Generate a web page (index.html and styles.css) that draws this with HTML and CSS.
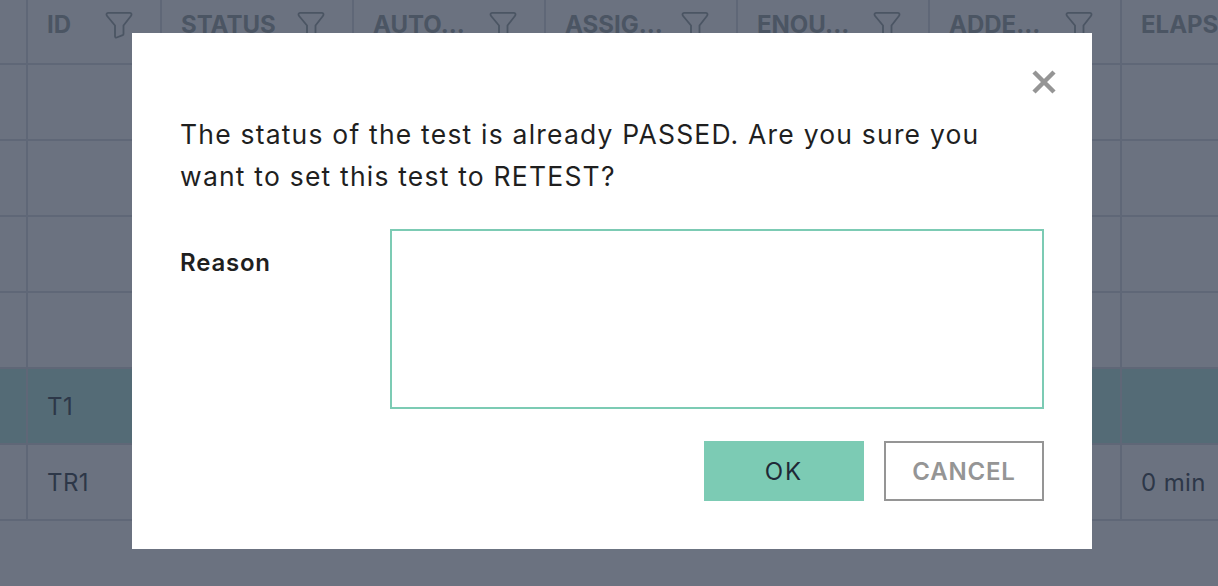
FILE: index.html
```html
<!DOCTYPE html>
<html lang="en">
<head>
  <meta charset="UTF-8" />
  <title>Test runs</title>
  <link rel="stylesheet" href="styles.css">
</head>
<body>
  <svg class="icon-defs" width="0" height="0">
    <symbol id="filter" viewBox="0 0 28 28">
      <path d="M1.500 3.500C1.500 2.500 2.200 1.800 3.200 1.800h21.600c1 0 1.700.7 1.700 1.700 0 .6-.2 1-.6 1.500L18.500 14.500V23c0 .6-.3 1-.8 1.200l-6 2.300c-.9.300-1.700-.2-1.700-1.200V14.500L2.100 5C1.700 4.500 1.500 4.100 1.500 3.500z"/>
    </symbol>
  </svg>

  <table class="runs">
    <colgroup>
      <col class="col-select">
      <col class="col-id">
      <col class="col-wide">
      <col class="col-wide">
      <col class="col-wide">
      <col class="col-wide">
      <col class="col-wide">
      <col class="col-last">
    </colgroup>
    <thead>
      <tr>
        <th></th>
        <th><div class="th-inner"><span class="th-label">ID</span><svg class="filter-icon"><use href="#filter"/></svg></div></th>
        <th><div class="th-inner"><span class="th-label">STATUS</span><svg class="filter-icon"><use href="#filter"/></svg></div></th>
        <th><div class="th-inner"><span class="th-label">AUTO...</span><svg class="filter-icon"><use href="#filter"/></svg></div></th>
        <th><div class="th-inner"><span class="th-label">ASSIG...</span><svg class="filter-icon"><use href="#filter"/></svg></div></th>
        <th><div class="th-inner"><span class="th-label">ENOU...</span><svg class="filter-icon"><use href="#filter"/></svg></div></th>
        <th><div class="th-inner"><span class="th-label">ADDE...</span><svg class="filter-icon"><use href="#filter"/></svg></div></th>
        <th><div class="th-inner"><span class="th-label">ELAPS</span></div></th>
      </tr>
    </thead>
    <tbody>
      <tr><td></td><td></td><td></td><td></td><td></td><td></td><td></td><td></td></tr>
      <tr><td></td><td></td><td></td><td></td><td></td><td></td><td></td><td></td></tr>
      <tr><td></td><td></td><td></td><td></td><td></td><td></td><td></td><td></td></tr>
      <tr><td></td><td></td><td></td><td></td><td></td><td></td><td></td><td></td></tr>
      <tr class="row-selected"><td></td><td>T1</td><td></td><td></td><td></td><td></td><td></td><td></td></tr>
      <tr><td></td><td>TR1</td><td></td><td></td><td></td><td></td><td></td><td>0 min</td></tr>
    </tbody>
  </table>

  <div class="modal">
    <button class="modal-close" aria-label="Close">
      <svg viewBox="0 0 24 24" width="24" height="24"><path d="M2 2l20 20M22 2L2 22"/></svg>
    </button>
    <p class="modal-text">The status of the test is already PASSED. Are you sure you want to set this test to RETEST?</p>
    <div class="form-row">
      <label class="form-label" for="reason">Reason</label>
      <textarea class="form-input" id="reason"></textarea>
    </div>
    <div class="modal-buttons">
      <button class="btn btn-ok">OK</button>
      <button class="btn btn-cancel">CANCEL</button>
    </div>
  </div>
</body>
</html>
```

FILE: styles.css
```css
html, body {
  height: 100%;
}

body {
  margin: 0;
  overflow: hidden;
  position: relative;
  background: #6b7280;
  color: #2d3748;
  font-family: Inter, "Open Sans", sans-serif;
}

.icon-defs {
  position: absolute;
}

.runs {
  width: 1218px;
  margin-top: -14px;
  table-layout: fixed;
  border-collapse: collapse;
}

.col-select { width: 27px; }
.col-id { width: 134px; }
.col-wide { width: 192px; }
.col-last { width: 97px; }

.runs th,
.runs td {
  border: 2px solid #5f6777;
  border-top: none;
  padding: 0 0 0 19px;
  text-align: left;
  overflow: hidden;
  white-space: nowrap;
}

.runs tr > :first-child {
  border-left: none;
}

.runs tr > :last-child {
  border-right: none;
}

.runs th {
  height: 77px;
  font-size: 24px;
  font-weight: 700;
  color: #4b5563;
}

.runs td {
  height: 74px;
  font-size: 24px;
  letter-spacing: 0.4px;
}

.row-selected td {
  background: #546b76;
}

.th-inner {
  display: flex;
  align-items: center;
  justify-content: space-between;
}

.filter-icon {
  flex: none;
  width: 28px;
  height: 28px;
  margin-right: 27px;
  fill: none;
  stroke: #4b5563;
  stroke-width: 1.800;
}

.modal {
  position: absolute;
  left: 132px;
  top: 33px;
  width: 960px;
  height: 516px;
  box-sizing: border-box;
  padding: 80px 48px 48px;
  background: #ffffff;
  color: #1f1f1f;
}

.modal-close {
  position: absolute;
  right: 36px;
  top: 37px;
  padding: 0;
  border: none;
  background: none;
  line-height: 0;
}

.modal-close path {
  fill: none;
  stroke: #959595;
  stroke-width: 4.500;
}

.modal-text {
  max-width: 820px;
  margin: 0 0 32px;
  font-size: 26.500px;
  line-height: 42px;
  letter-spacing: 1.200px;
}

.form-row {
  display: flex;
}

.form-label {
  width: 210px;
  padding-top: 18px;
  font-size: 24px;
  line-height: 32px;
  font-weight: 600;
  letter-spacing: 0.8px;
}

.form-input {
  width: 654px;
  height: 180px;
  box-sizing: border-box;
  border: 2px solid #7ccbb4;
  border-radius: 0;
  outline: none;
  resize: none;
}

.modal-buttons {
  display: flex;
  justify-content: flex-end;
  gap: 20px;
  margin-top: 32px;
}

.btn {
  width: 160px;
  height: 60px;
  box-sizing: border-box;
  font-family: Inter, "Open Sans", sans-serif;
  font-size: 24px;
  font-weight: 500;
  letter-spacing: 0.8px;
}

.btn-ok {
  border: none;
  background: #7ccbb4;
  color: #1f2937;
  font-weight: 400;
  letter-spacing: 2px;
}

.btn-cancel {
  border: 2px solid #959595;
  background: #ffffff;
  color: #959595;
  font-weight: 600;
}
```
